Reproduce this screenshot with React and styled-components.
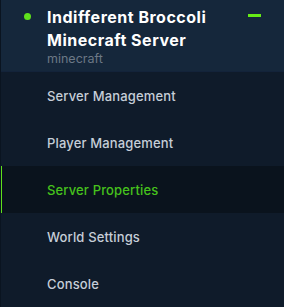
import React from "react";
import styled, { createGlobalStyle } from "styled-components";

const Global = createGlobalStyle`
  html, body { margin: 0; padding: 0; background: #0f1b2a; }
  body { font-family: Inter, "Noto Sans", sans-serif; }
`;

const Sidebar = styled.nav`
  width: 284px;
  height: 307px;
  box-sizing: border-box;
  border-left: 1px solid #0a1420;
  background: #0f1b2a;
  display: flex;
  flex-direction: column;
  overflow: hidden;
`;

const Header = styled.div`
  height: 72px;
  flex: none;
  box-sizing: border-box;
  background: #15273b;
  border-bottom: 1px solid #13233a;
  display: grid;
  grid-template-columns: 46px 1fr 36px;
  padding-top: 6px;
`;

const DotCell = styled.div`
  display: flex;
  justify-content: center;
  padding-top: 7px;
  padding-left: 6px;
  box-sizing: border-box;
`;

const Dot = styled.span`
  width: 7px;
  height: 7px;
  border-radius: 50%;
  background: #5fe01c;
`;

const Titles = styled.div`
  display: flex;
  flex-direction: column;
`;

const Title = styled.div`
  color: #ffffff;
  font-weight: 700;
  font-size: 16px;
  line-height: 23px;
  letter-spacing: 0.5px;
`;

const Sub = styled.div`
  color: #6c7886;
  font-size: 12.5px;
  line-height: 14px;
  margin-top: 0;
`;

const Toggle = styled.div`
  padding-top: 8px;
`;

const Minus = styled.span`
  display: block;
  width: 13px;
  height: 3px;
  background: #66ec16;
`;

const Item = styled.div`
  height: 47px;
  flex: none;
  box-sizing: border-box;
  display: flex;
  align-items: center;
  padding-left: 46px;
  font-size: 13px;
  font-weight: 500;
  letter-spacing: 0.15px;
  color: ${(p) => (p.$active ? "#46c21c" : "#c6ced8")};
  background: ${(p) => (p.$active ? "#0a131d" : "transparent")};
  box-shadow: ${(p) => (p.$active ? "inset 1px 0 0 #5fe01c" : "none")};
`;

const items = [
  "Server Management",
  "Player Management",
  "Server Properties",
  "World Settings",
  "Console",
];

export default function App() {
  return (
    <>
      <Global />
      <Sidebar>
        <Header>
          <DotCell>
            <Dot />
          </DotCell>
          <Titles>
            <Title>Indifferent Broccoli<br />Minecraft Server</Title>
            <Sub>minecraft</Sub>
          </Titles>
          <Toggle>
            <Minus />
          </Toggle>
        </Header>
        {items.map((t) => (
          <Item key={t} $active={t === "Server Properties"}>
            {t}
          </Item>
        ))}
      </Sidebar>
    </>
  );
}
